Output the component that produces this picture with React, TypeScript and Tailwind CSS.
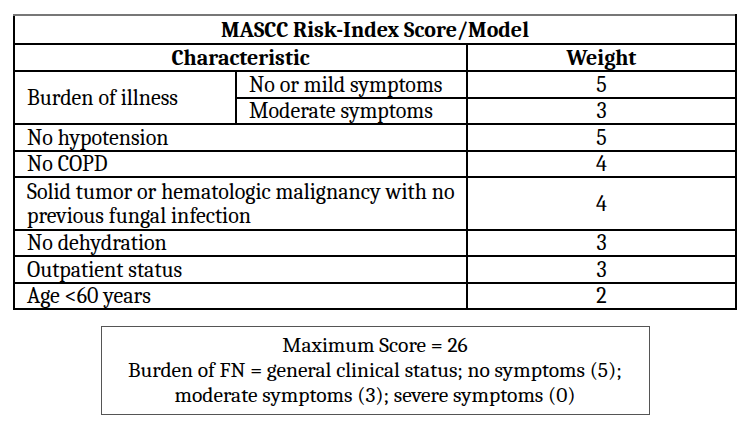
const rows: { label: string; weight: number; h: string }[] = [
  { label: "No hypotension", weight: 5, h: "h-[27px]" },
  { label: "No COPD", weight: 4, h: "h-[26px]" },
  { label: "", weight: 4, h: "h-[53px]" },
  { label: "No dehydration", weight: 3, h: "h-[26px]" },
  { label: "Outpatient status", weight: 3, h: "h-[27px]" },
  { label: "Age <60 years", weight: 2, h: "h-[25px]" },
];

const cell = "border-2 border-black p-0 align-middle";

export default function App() {
  return (
    <div className="w-[750px] h-[426px] bg-white text-black font-serif overflow-hidden">
      <div className="pt-[14px] pl-[13px]">
        <table className="w-[724px] table-fixed border-collapse text-[22px] leading-[24px]">
          <colgroup>
            <col className="w-[222px]" />
            <col className="w-[231px]" />
            <col />
          </colgroup>
          <tbody>
            <tr>
              <td colSpan={3} className={`${cell} border-t-[#777] h-[29px] text-center font-bold`}>
                MASCC Risk-Index Score/Model
              </td>
            </tr>
            <tr>
              <td colSpan={2} className={`${cell} h-[27px] text-center font-bold`}>
                Characteristic
              </td>
              <td className={`${cell} text-center font-bold`}>Weight</td>
            </tr>
            <tr>
              <td rowSpan={2} className={`${cell} pl-3`}>
                Burden of illness
              </td>
              <td className={`${cell} h-[27px] pl-3`}>No or mild symptoms</td>
              <td className={`${cell} text-center`}>5</td>
            </tr>
            <tr>
              <td className={`${cell} h-[26px] pl-3`}>Moderate symptoms</td>
              <td className={`${cell} text-center`}>3</td>
            </tr>
            {rows.map((r, i) => (
              <tr key={i}>
                <td colSpan={2} className={`${cell} ${r.h} pl-3`}>
                  {r.label || (
                    <>
                      Solid tumor or hematologic malignancy with no
                      <br />
                      previous fungal infection
                    </>
                  )}
                </td>
                <td className={`${cell} text-center`}>{r.weight}</td>
              </tr>
            ))}
          </tbody>
        </table>
      </div>

      <div className="mt-[16px] mx-auto w-[549px] h-[89px] border border-[#555] py-[6px] text-center text-[21.5px] leading-[25px]">
        <p>Maximum Score = 26</p>
        <p>Burden of FN = general clinical status; no symptoms (5);</p>
        <p>moderate symptoms (3); severe symptoms (0)</p>
      </div>
    </div>
  );
}
